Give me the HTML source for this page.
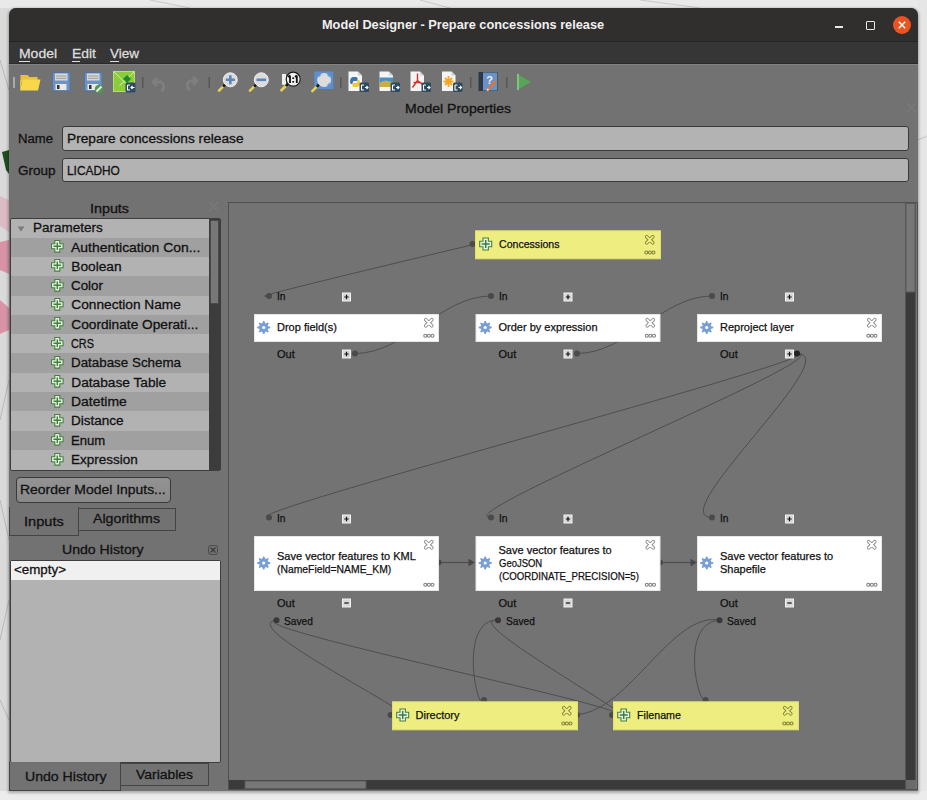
<!DOCTYPE html>
<html><head><meta charset="utf-8">
<style>
*{margin:0;padding:0;box-sizing:border-box}
html,body{width:927px;height:800px;overflow:hidden;background:#e6e6e6;font-family:"Liberation Sans",sans-serif}
.a{position:absolute}
.t{position:absolute;white-space:pre;line-height:1;transform-origin:0 0;-webkit-text-stroke:0.3px currentColor}
.nt{position:absolute;white-space:pre;line-height:13px;font-size:11px;color:#111;transform-origin:0 0;-webkit-text-stroke:0.25px #111}
.field{position:absolute;background:#b3b3b3;border:1px solid #3a3a3a;border-radius:3px}
</style></head><body>

<svg class="a" style="left:0;top:0" width="927" height="800">
  <rect x="0" y="0" width="927" height="800" fill="#e4e4e4"/>
  <rect x="0" y="0" width="9" height="800" fill="#dadada"/>
  <path d="M2 152 L9 150 L9 174 L6 170 Z" fill="#1f4f1f"/>
  <path d="M0 196 L9 200 L9 232 L0 226 Z" fill="#dcbcc4"/>
  <path d="M0 242 L9 240 L9 274 L0 270 Z" fill="#d894a6"/>
  <path d="M0 300 L9 308 L9 330 L0 334 Z" fill="#d894a6"/>
  <path d="M0 0 H927 V8 H0 Z" fill="#e9e9e9"/>
  <path d="M918 0 H927 V800 H918 Z" fill="#e6e6e6"/>
  <path d="M0 791 H927 V800 H0 Z" fill="#ececec"/>
  <path d="M0 60 L9 90 M0 420 L9 380 M0 500 L9 540 M0 640 L9 600 M0 700 L9 720" stroke="#b0b0b0" stroke-width="0.8"/>
  <path d="M150 0 L190 8 M420 0 L450 8 M640 0 L700 8 M918 140 Q922 138 927 136" stroke="#c0c0c0" stroke-width="0.8"/>
</svg>

<div class="a" style="left:9px;top:8px;width:909px;height:783px;background:#727272;border-radius:7px 7px 0 0;box-shadow:0 1px 3px 1px rgba(0,0,0,.28)"></div>
<div class="a" style="left:9px;top:8px;width:909px;height:33px;background:#312e2e;border-radius:7px 7px 0 0"></div>
<div class="a" style="left:834.5px;top:26.3px;width:8px;height:1.7px;background:#e8e8e8"></div>
<div class="a" style="left:866px;top:21px;width:8.5px;height:8.5px;border:1.6px solid #e8e8e8;border-radius:1px"></div>
<div class="a" style="left:892.5px;top:16px;width:18px;height:18px;border-radius:50%;background:#e95420"></div>
<svg class="a" style="left:892.5px;top:16px" width="18" height="18"><path d="M5.8 5.8 L12.2 12.2 M12.2 5.8 L5.8 12.2" stroke="#fff" stroke-width="1.5"/></svg>
<div class="a" style="left:9px;top:41px;width:909px;height:23px;background:#363636;border-top:1.5px solid #242424;border-bottom:1px solid #2a2a2a"></div>
<div class="a" style="left:9px;top:64px;width:909px;height:1px;background:#828282"></div>
<div class="a" style="left:19px;top:61px;width:11px;height:1px;background:#dddddd"></div>
<div class="a" style="left:72px;top:61px;width:8px;height:1px;background:#dddddd"></div>
<div class="a" style="left:110px;top:61px;width:9px;height:1px;background:#dddddd"></div>

<!-- toolbar -->
<svg class="a" style="left:0;top:64px" width="560" height="36">
  <rect x="13" y="13" width="2" height="11" fill="#a9a9a9"/>
  <!-- folder -->
  <path d="M20.5 11 h7 l2 2 h8 v4 h-17 z" fill="#e8c33a"/>
  <path d="M20 26.5 l2.5 -11 h18 l-2.5 11 z" fill="#f7d84a"/>
  <path d="M20 16 v10.5 l2.5 -11 z" fill="#e6c038"/>
  <!-- save -->
  <g transform="translate(52,8)">
    <rect x="0.5" y="0.5" width="17.5" height="18.5" rx="1.5" fill="#6d93c3" stroke="#54749e" stroke-width="1"/>
    <rect x="3" y="1.5" width="12.5" height="7" fill="#d9d9d9"/>
    <rect x="4" y="3.5" width="10.5" height="1" fill="#9a9a9a"/>
    <rect x="4" y="5.8" width="10.5" height="1" fill="#9a9a9a"/>
    <rect x="3.5" y="12" width="11" height="6" fill="#e8e8e8"/>
    <rect x="5" y="13" width="2.5" height="4" fill="#333"/>
  </g>
  <!-- save as -->
  <g transform="translate(84,8)">
    <rect x="0.5" y="0.5" width="17.5" height="18.5" rx="1.5" fill="#6d93c3" stroke="#54749e" stroke-width="1"/>
    <rect x="3" y="1.5" width="12.5" height="7" fill="#d9d9d9"/>
    <rect x="4" y="3.5" width="10.5" height="1" fill="#9a9a9a"/>
    <rect x="4" y="5.8" width="10.5" height="1" fill="#9a9a9a"/>
    <rect x="3.5" y="12" width="11" height="6" fill="#e8e8e8"/>
    <rect x="5" y="13" width="2.5" height="4" fill="#333"/>
    <circle cx="15" cy="17" r="4.2" fill="#4f9a4f"/>
    <path d="M12.5 19.5 L17.5 14.5" stroke="#f2f2f2" stroke-width="1.8"/>
  </g>
  <!-- export model image -->
  <g transform="translate(113.5,7.5)">
    <rect x="0" y="0" width="21" height="20" fill="#8ccc3c" stroke="#b8e070" stroke-width="1"/>
    <path d="M0.5 0.5 L20.5 19.5 M20.5 0.5 L6 14" stroke="#d8f0a8" stroke-width="1"/>
    <path d="M13.5 3.5 l4 4 l-4 4 l-4 -4 z" fill="#1e8a2e"/>
    <rect x="12" y="11" width="10" height="10" rx="1.5" fill="#2e4a5e"/>
    <path d="M14 13.5 v5 h2.5 M14 13.5 h2.5 M17.5 16 h3.5 M19 14.5 l-1.5 1.5 l1.5 1.5" stroke="#fff" stroke-width="1.1" fill="none"/>
  </g>
  <rect x="142" y="13" width="1.5" height="11" fill="#565656"/>
  <!-- undo redo disabled -->
  <path d="M157 14 l-4 4 l4 4 M153 18 h8 a5 5 0 0 1 0 9" stroke="#7f7f7f" stroke-width="2.8" fill="none"/>
  <path d="M193 13 l4 4 l-4 4 M197 17 h-7 a5 5 0 0 0 0 9" stroke="#7f7f7f" stroke-width="2.8" fill="none"/>
  <rect x="208.5" y="13" width="1.5" height="11" fill="#565656"/>
  <!-- zoom in -->
  <g transform="translate(230.3,15.8)">
    <path d="M-11.3 10.9 L-7 6.6" stroke="#e6d25a" stroke-width="2.6" stroke-linecap="round"/>
    <path d="M-7.2 6.8 L-5 4.6" stroke="#111" stroke-width="2.4"/>
    <circle cx="0" cy="0" r="7" fill="#dcdcdc" stroke="#eeeeee" stroke-width="1"/>
    <path d="M-4.5 0 h9 M0 -4.5 v9" stroke="#5a86b8" stroke-width="2.6"/>
  </g>
  <g transform="translate(261.3,15.8)">
    <path d="M-11.3 10.9 L-7 6.6" stroke="#e6d25a" stroke-width="2.6" stroke-linecap="round"/>
    <path d="M-7.2 6.8 L-5 4.6" stroke="#111" stroke-width="2.4"/>
    <circle cx="0" cy="0" r="7" fill="#dcdcdc" stroke="#eeeeee" stroke-width="1"/>
    <path d="M-4.8 0 h9.6" stroke="#5a86b8" stroke-width="2.6"/>
  </g>
  <g transform="translate(293.2,15.2)">
    <rect x="-11.2" y="-5.2" width="4" height="10.8" fill="#eef2ee"/>
    <path d="M-11.8 11.1 L-7.2 6.6" stroke="#e6d25a" stroke-width="2.6" stroke-linecap="round"/>
    <path d="M-7.4 6.8 L-5.2 4.6" stroke="#111" stroke-width="2.4"/>
    <circle cx="0" cy="0" r="7" fill="#efefef" stroke="#1a1a1a" stroke-width="1.2"/>
    <path d="M-3.2 -3.8 V3.8 M-5 -2.2 L-3.2 -3.8 M3.6 -3.8 V3.8 M1.8 -2.2 L3.6 -3.8" stroke="#111" stroke-width="1.8" fill="none"/><rect x="-0.9" y="-1.8" width="1.8" height="1.6" fill="#111"/><rect x="-0.9" y="1.8" width="1.8" height="1.6" fill="#111"/>
  </g>
  <g transform="translate(324.1,16)">
    <rect x="-9.8" y="-8.5" width="19" height="17.5" fill="#5a8fd0"/>
    <circle cx="0" cy="0" r="7" fill="#dcdcdc"/>
    <path d="M-5.5 -5.5 l3 0 l-3 3 z M5.5 -5.5 l-3 0 l3 3 z M5.5 5.5 l-3 0 l3 -3 z" fill="#5a8fd0"/>
    <path d="M-11.8 11.1 L-7.2 6.6" stroke="#e6d25a" stroke-width="2.6" stroke-linecap="round"/>
    <path d="M-7.4 6.8 L-5.2 4.6" stroke="#111" stroke-width="2.4"/>
  </g>
  <rect x="340" y="13" width="1.5" height="11" fill="#565656"/>
  <!-- page icons -->
  <g transform="translate(348.5,7.5)">
    <path d="M0 0 h9.5 l4 4 v15.5 h-13.5 z" fill="#f4f4f4"/>
    <path d="M9.5 0 v4 h4" fill="#d0d0d0"/>
    <path d="M1.5 10.5 Q1.5 5.5 5 5.5 H7.5 Q9 5.5 9 7 V9.5 H5.5 Q4.2 9.5 4.2 11 V12.5 H3 Q1.5 12.5 1.5 10.5 Z" fill="#3a75b0"/>
    <path d="M11.5 10.5 Q11.5 15.5 8 15.5 H5.5 Q4 15.5 4 14 V11.5 H7.5 Q8.8 11.5 8.8 10 V8.5 H10 Q11.5 8.5 11.5 10.5 Z" fill="#f2c53a"/>
    <rect x="11" y="11" width="9.5" height="9.5" rx="1.5" fill="#2e4a5e"/>
    <path d="M13 13.5 v5 h2.5 M13 13.5 h2.5 M16.5 16 h3 M18 14.5 l1.5 1.5 l-1.5 1.5" stroke="#fff" stroke-width="1.1" fill="none"/>
  </g>
  <g transform="translate(379.5,7.5)">
    <path d="M0 0 h9.5 l4 4 v15.5 h-13.5 z" fill="#f4f4f4"/>
    <path d="M9.5 0 v4 h4" fill="#d0d0d0"/>
    <rect x="0" y="6" width="13.5" height="9.5" fill="#4a90c8"/>
    <path d="M0 15.5 v-4 q6 -5 13.5 0 v4 z" fill="#c8b040"/>
    <rect x="11" y="11" width="9.5" height="9.5" rx="1.5" fill="#2e4a5e"/>
    <path d="M13 13.5 v5 h2.5 M13 13.5 h2.5 M16.5 16 h3 M18 14.5 l1.5 1.5 l-1.5 1.5" stroke="#fff" stroke-width="1.1" fill="none"/>
  </g>
  <g transform="translate(410.5,7.5)">
    <path d="M0 0 h9.5 l4 4 v15.5 h-13.5 z" fill="#f4f4f4"/>
    <path d="M9.5 0 v4 h4" fill="#d0d0d0"/>
    <path d="M7 2 v7 l-5 7 M7 9 l5 4 M3 11 h8" stroke="#d8302a" stroke-width="1.4" fill="none"/>
    <rect x="11" y="11" width="9.5" height="9.5" rx="1.5" fill="#2e4a5e"/>
    <path d="M13 13.5 v5 h2.5 M13 13.5 h2.5 M16.5 16 h3 M18 14.5 l1.5 1.5 l-1.5 1.5" stroke="#fff" stroke-width="1.1" fill="none"/>
  </g>
  <g transform="translate(442,7.5)">
    <path d="M0 0 h9.5 l4 4 v15.5 h-13.5 z" fill="#f4f4f4"/>
    <path d="M9.5 0 v4 h4" fill="#d0d0d0"/>
    <path d="M6.5 4.5 v11 M1.5 10 h10 M3 6.5 l7 7 M10 6.5 l-7 7" stroke="#f5a623" stroke-width="1.8"/>
    <rect x="11" y="11" width="9.5" height="9.5" rx="1.5" fill="#2e4a5e"/>
    <path d="M13 13.5 v5 h2.5 M13 13.5 h2.5 M16.5 16 h3 M18 14.5 l1.5 1.5 l-1.5 1.5" stroke="#fff" stroke-width="1.1" fill="none"/>
  </g>
  <rect x="470" y="13" width="1.5" height="11" fill="#565656"/>
  <g transform="translate(478.5,8)">
    <rect x="0" y="0" width="19" height="19" fill="#2a3a48"/>
    <rect x="4.5" y="0.5" width="14" height="18" fill="#6a92c4"/>
    <text x="11" y="12" font-size="11" font-weight="bold" text-anchor="middle" fill="#f0f0f0" font-family="Liberation Sans">?</text>
    <path d="M9 18 L17 9" stroke="#e8742a" stroke-width="2.6"/>
    <path d="M8.5 18.5 L10 17" stroke="#f5d0a0" stroke-width="2"/>
  </g>
  <rect x="506" y="13" width="1.5" height="11" fill="#565656"/>
  <path d="M517 10 L531 18 L517 26 z" fill="#58a558"/>
  <rect x="517" y="10" width="2" height="16" fill="#7cc67c"/>
</svg>

<svg class="a" style="left:906px;top:102px" width="11" height="11"><path d="M1.5 1.5 L9.5 9.5 M9.5 1.5 L1.5 9.5" stroke="#838383" stroke-width="1.2" stroke-dasharray="1.5 1"/></svg>
<div class="field" style="left:62px;top:126px;width:847px;height:25px"></div>
<div class="field" style="left:62px;top:157.5px;width:847px;height:24.5px"></div>
<svg class="a" style="left:208px;top:201px" width="11" height="11"><path d="M1.5 1.5 L9.5 9.5 M9.5 1.5 L1.5 9.5" stroke="#808080" stroke-width="1.2" stroke-dasharray="1.5 1"/></svg>
<div class="a" style="left:9.5px;top:218px;width:211px;height:252.5px;background:#b2b2b2;border:1px solid #3e3e3e;border-radius:2px"></div>
<svg class="a" style="left:16.5px;top:225.5px" width="10" height="7"><path d="M0.5 0.5 h7 l-3.5 5 z" fill="#7a7a7a"/></svg>
<div class="a" style="left:10.5px;top:237.60px;width:198.5px;height:19.31px;background:#a0a0a0"></div>
<svg class="a" style="left:51px;top:240.1px" width="14" height="14"><path d="M3.8 0.5 H8.8 V3.8 H12.1 V8.8 H8.8 V12.1 H3.8 V8.8 H0.5 V3.8 H3.8 Z" fill="#e4f5de" stroke="#4b7d45" stroke-width="1.1"/><path d="M6.3 2.5 V10.1 M2.5 6.3 H10.1" stroke="#3f8040" stroke-width="1.4"/></svg>
<svg class="a" style="left:51px;top:259.4px" width="14" height="14"><path d="M3.8 0.5 H8.8 V3.8 H12.1 V8.8 H8.8 V12.1 H3.8 V8.8 H0.5 V3.8 H3.8 Z" fill="#e4f5de" stroke="#4b7d45" stroke-width="1.1"/><path d="M6.3 2.5 V10.1 M2.5 6.3 H10.1" stroke="#3f8040" stroke-width="1.4"/></svg>
<div class="a" style="left:10.5px;top:276.22px;width:198.5px;height:19.31px;background:#a0a0a0"></div>
<svg class="a" style="left:51px;top:278.7px" width="14" height="14"><path d="M3.8 0.5 H8.8 V3.8 H12.1 V8.8 H8.8 V12.1 H3.8 V8.8 H0.5 V3.8 H3.8 Z" fill="#e4f5de" stroke="#4b7d45" stroke-width="1.1"/><path d="M6.3 2.5 V10.1 M2.5 6.3 H10.1" stroke="#3f8040" stroke-width="1.4"/></svg>
<svg class="a" style="left:51px;top:298.0px" width="14" height="14"><path d="M3.8 0.5 H8.8 V3.8 H12.1 V8.8 H8.8 V12.1 H3.8 V8.8 H0.5 V3.8 H3.8 Z" fill="#e4f5de" stroke="#4b7d45" stroke-width="1.1"/><path d="M6.3 2.5 V10.1 M2.5 6.3 H10.1" stroke="#3f8040" stroke-width="1.4"/></svg>
<div class="a" style="left:10.5px;top:314.84px;width:198.5px;height:19.31px;background:#a0a0a0"></div>
<svg class="a" style="left:51px;top:317.3px" width="14" height="14"><path d="M3.8 0.5 H8.8 V3.8 H12.1 V8.8 H8.8 V12.1 H3.8 V8.8 H0.5 V3.8 H3.8 Z" fill="#e4f5de" stroke="#4b7d45" stroke-width="1.1"/><path d="M6.3 2.5 V10.1 M2.5 6.3 H10.1" stroke="#3f8040" stroke-width="1.4"/></svg>
<svg class="a" style="left:51px;top:336.6px" width="14" height="14"><path d="M3.8 0.5 H8.8 V3.8 H12.1 V8.8 H8.8 V12.1 H3.8 V8.8 H0.5 V3.8 H3.8 Z" fill="#e4f5de" stroke="#4b7d45" stroke-width="1.1"/><path d="M6.3 2.5 V10.1 M2.5 6.3 H10.1" stroke="#3f8040" stroke-width="1.4"/></svg>
<div class="a" style="left:10.5px;top:353.46px;width:198.5px;height:19.31px;background:#a0a0a0"></div>
<svg class="a" style="left:51px;top:356.0px" width="14" height="14"><path d="M3.8 0.5 H8.8 V3.8 H12.1 V8.8 H8.8 V12.1 H3.8 V8.8 H0.5 V3.8 H3.8 Z" fill="#e4f5de" stroke="#4b7d45" stroke-width="1.1"/><path d="M6.3 2.5 V10.1 M2.5 6.3 H10.1" stroke="#3f8040" stroke-width="1.4"/></svg>
<svg class="a" style="left:51px;top:375.3px" width="14" height="14"><path d="M3.8 0.5 H8.8 V3.8 H12.1 V8.8 H8.8 V12.1 H3.8 V8.8 H0.5 V3.8 H3.8 Z" fill="#e4f5de" stroke="#4b7d45" stroke-width="1.1"/><path d="M6.3 2.5 V10.1 M2.5 6.3 H10.1" stroke="#3f8040" stroke-width="1.4"/></svg>
<div class="a" style="left:10.5px;top:392.08px;width:198.5px;height:19.31px;background:#a0a0a0"></div>
<svg class="a" style="left:51px;top:394.6px" width="14" height="14"><path d="M3.8 0.5 H8.8 V3.8 H12.1 V8.8 H8.8 V12.1 H3.8 V8.8 H0.5 V3.8 H3.8 Z" fill="#e4f5de" stroke="#4b7d45" stroke-width="1.1"/><path d="M6.3 2.5 V10.1 M2.5 6.3 H10.1" stroke="#3f8040" stroke-width="1.4"/></svg>
<svg class="a" style="left:51px;top:413.9px" width="14" height="14"><path d="M3.8 0.5 H8.8 V3.8 H12.1 V8.8 H8.8 V12.1 H3.8 V8.8 H0.5 V3.8 H3.8 Z" fill="#e4f5de" stroke="#4b7d45" stroke-width="1.1"/><path d="M6.3 2.5 V10.1 M2.5 6.3 H10.1" stroke="#3f8040" stroke-width="1.4"/></svg>
<div class="a" style="left:10.5px;top:430.70px;width:198.5px;height:19.31px;background:#a0a0a0"></div>
<svg class="a" style="left:51px;top:433.2px" width="14" height="14"><path d="M3.8 0.5 H8.8 V3.8 H12.1 V8.8 H8.8 V12.1 H3.8 V8.8 H0.5 V3.8 H3.8 Z" fill="#e4f5de" stroke="#4b7d45" stroke-width="1.1"/><path d="M6.3 2.5 V10.1 M2.5 6.3 H10.1" stroke="#3f8040" stroke-width="1.4"/></svg>
<svg class="a" style="left:51px;top:452.5px" width="14" height="14"><path d="M3.8 0.5 H8.8 V3.8 H12.1 V8.8 H8.8 V12.1 H3.8 V8.8 H0.5 V3.8 H3.8 Z" fill="#e4f5de" stroke="#4b7d45" stroke-width="1.1"/><path d="M6.3 2.5 V10.1 M2.5 6.3 H10.1" stroke="#3f8040" stroke-width="1.4"/></svg>
<div class="a" style="left:209px;top:219px;width:10.5px;height:250.5px;background:#3c3c3c"></div>
<div class="a" style="left:209.5px;top:219.5px;width:9px;height:84px;background:#777777;border:1px solid #4a4a4a"></div>
<div class="a" style="left:15.5px;top:476.5px;width:155px;height:26px;background:linear-gradient(#939393,#888888);border:1px solid #3a3a3a;border-radius:4px"></div>
<div class="a" style="left:78.5px;top:508px;width:97px;height:22.5px;background:#727272;border:1px solid #444;border-left:none"></div>
<div class="a" style="left:9px;top:507px;width:70px;height:28.5px;background:#727272;border:1px solid #444;border-top:none"></div>
<svg class="a" style="left:207.5px;top:544.5px" width="11" height="11"><rect x="0.5" y="0.5" width="9" height="9" rx="2" fill="none" stroke="#4a4a4a" stroke-width="1"/><path d="M2.5 2.5 L7.5 7.5 M7.5 2.5 L2.5 7.5" stroke="#3a3a3a" stroke-width="1.2"/></svg>
<div class="a" style="left:9.5px;top:559.5px;width:211px;height:203.5px;background:#b2b2b2;border:1px solid #3e3e3e;border-radius:2px"></div>
<div class="a" style="left:10.5px;top:560.5px;width:209px;height:19px;background:#f0f0f0"></div>
<div class="a" style="left:120.5px;top:763px;width:88px;height:22.5px;background:#727272;border:1px solid #444;border-left:none"></div>
<div class="a" style="left:9px;top:762px;width:112px;height:29px;background:#727272;border:1px solid #444;border-top:none"></div>
<svg class="a" style="left:0;top:0" width="927" height="800">
<rect x="228.5" y="202.5" width="689" height="587" fill="#737373" stroke="#505050" stroke-width="1"/>
<rect x="905.5" y="203" width="10" height="577" fill="#3a3a3a"/>
<rect x="906" y="203.5" width="9" height="88.5" fill="#777" stroke="#5a5a5a" stroke-width="1"/>
<rect x="229" y="780" width="677" height="9" fill="#3a3a3a"/>
<rect x="245" y="781" width="121" height="7.5" fill="#777" stroke="#5a5a5a" stroke-width="1"/>
<rect x="905.5" y="780" width="10" height="9" fill="#6a6a6a"/>
<path d="M268.6 295.8 C232.1 301.6 446.8 251.0 473.9 244.4" fill="none" stroke="#4e4e4e" stroke-width="1"/>
<path d="M355 353.5 C405 353.5 441 296 491 296" fill="none" stroke="#4e4e4e" stroke-width="1"/>
<path d="M577 353.5 C627 353.5 662 296 712 296" fill="none" stroke="#4e4e4e" stroke-width="1"/>
<path d="M797 353.5 C847 353.5 219 517.5 269 517.5" fill="none" stroke="#4e4e4e" stroke-width="1"/>
<path d="M797 353.5 C847 353.5 441 517.5 491 517.5" fill="none" stroke="#4e4e4e" stroke-width="1"/>
<path d="M797 353.5 C847 353.5 662 517.5 712 517.5" fill="none" stroke="#4e4e4e" stroke-width="1"/>
<path d="M276.2 620.3 C232.2 625.4 445.4 727.4 391.5 712" fill="none" stroke="#4e4e4e" stroke-width="1"/>
<path d="M276.2 620.3 C238.6 627.5 660.9 713.2 612.5 714.7" fill="none" stroke="#4e4e4e" stroke-width="1"/>
<path d="M497.5 620 C456.5 620.1 478.7 719.8 484.4 699.75" fill="none" stroke="#4e4e4e" stroke-width="1"/>
<path d="M497.8 620.3 C451.7 617.4 681.6 741.7 612.5 714.7" fill="none" stroke="#4e4e4e" stroke-width="1"/>
<path d="M719.5 620.1 C672.4 611.5 629.7 709.2 578.3 714.5" fill="none" stroke="#4e4e4e" stroke-width="1"/>
<path d="M719.5 620.1 C678.9 623.2 698.3 706.2 705.7 699.9" fill="none" stroke="#4e4e4e" stroke-width="1"/>
<path d="M438.5 562.5 H469" stroke="#4e4e4e" stroke-width="1.2"/>
<path d="M468.5 558.8 L475 562.5 L468.5 566.3 z" fill="#474747"/>
<path d="M438.5 559.5 a3 3 0 0 1 0 6 z" fill="#474747"/>
<path d="M660 562.5 H691" stroke="#4e4e4e" stroke-width="1.2"/>
<path d="M690.5 558.8 L697 562.5 L690.5 566.3 z" fill="#474747"/>
<path d="M660 559.5 a3 3 0 0 1 0 6 z" fill="#474747"/>
<rect x="254.5" y="314.5" width="184" height="27" fill="#ffffff" stroke="#e6e6e6" stroke-width="1"/>
<path d="M263.05 320.93 L264.35 320.93 L265.04 323.10 L265.87 323.44 L267.89 322.40 L268.80 323.31 L267.76 325.33 L268.10 326.16 L270.27 326.85 L270.27 328.15 L268.10 328.84 L267.76 329.67 L268.80 331.69 L267.89 332.60 L265.87 331.56 L265.04 331.90 L264.35 334.07 L263.05 334.07 L262.36 331.90 L261.53 331.56 L259.51 332.60 L258.60 331.69 L259.64 329.67 L259.30 328.84 L257.13 328.15 L257.13 326.85 L259.30 326.16 L259.64 325.33 L258.60 323.31 L259.51 322.40 L261.53 323.44 L262.36 323.10z" fill="#789ed6"/><circle cx="263.7" cy="327.5" r="1.6" fill="#fff"/>
<path d="M425.7 319.7 L431.8 325.8 M431.8 319.7 L425.7 325.8" stroke="#8a8a8a" stroke-width="3.6" stroke-linecap="round"/><path d="M425.7 319.7 L431.8 325.8 M431.8 319.7 L425.7 325.8" stroke="#ffffff" stroke-width="1.8" stroke-linecap="round"/>
<circle cx="425.3" cy="335.7" r="1.5" fill="none" stroke="#808080" stroke-width="1.1"/><circle cx="428.9" cy="335.7" r="1.5" fill="none" stroke="#808080" stroke-width="1.1"/><circle cx="432.5" cy="335.7" r="1.5" fill="none" stroke="#808080" stroke-width="1.1"/>
<circle cx="269" cy="296" r="3" fill="#4a4a4a"/>
<rect x="342.5" y="293" width="8" height="8" fill="#d6d6d6" stroke="#f2f2f2" stroke-width="1"/>
<path d="M344.3 297 h4.4 M346.5 294.8 v4.4" stroke="#111" stroke-width="1.2"/>
<rect x="342.5" y="350" width="8" height="8" fill="#d6d6d6" stroke="#f2f2f2" stroke-width="1"/>
<path d="M344.3 354 h4.4 M346.5 351.8 v4.4" stroke="#111" stroke-width="1.2"/>
<circle cx="355" cy="353.5" r="3" fill="#4a4a4a"/>
<rect x="476.0" y="314.5" width="184" height="27" fill="#ffffff" stroke="#e6e6e6" stroke-width="1"/>
<path d="M484.55 320.93 L485.85 320.93 L486.54 323.10 L487.37 323.44 L489.39 322.40 L490.30 323.31 L489.26 325.33 L489.60 326.16 L491.77 326.85 L491.77 328.15 L489.60 328.84 L489.26 329.67 L490.30 331.69 L489.39 332.60 L487.37 331.56 L486.54 331.90 L485.85 334.07 L484.55 334.07 L483.86 331.90 L483.03 331.56 L481.01 332.60 L480.10 331.69 L481.14 329.67 L480.80 328.84 L478.63 328.15 L478.63 326.85 L480.80 326.16 L481.14 325.33 L480.10 323.31 L481.01 322.40 L483.03 323.44 L483.86 323.10z" fill="#789ed6"/><circle cx="485.2" cy="327.5" r="1.6" fill="#fff"/>
<path d="M647.2 319.7 L653.3 325.8 M653.3 319.7 L647.2 325.8" stroke="#8a8a8a" stroke-width="3.6" stroke-linecap="round"/><path d="M647.2 319.7 L653.3 325.8 M653.3 319.7 L647.2 325.8" stroke="#ffffff" stroke-width="1.8" stroke-linecap="round"/>
<circle cx="646.8" cy="335.7" r="1.5" fill="none" stroke="#808080" stroke-width="1.1"/><circle cx="650.4" cy="335.7" r="1.5" fill="none" stroke="#808080" stroke-width="1.1"/><circle cx="654.0" cy="335.7" r="1.5" fill="none" stroke="#808080" stroke-width="1.1"/>
<circle cx="491" cy="296" r="3" fill="#4a4a4a"/>
<rect x="564.0" y="293" width="8" height="8" fill="#d6d6d6" stroke="#f2f2f2" stroke-width="1"/>
<path d="M565.8 297 h4.4 M568.0 294.8 v4.4" stroke="#111" stroke-width="1.2"/>
<rect x="564.0" y="350" width="8" height="8" fill="#d6d6d6" stroke="#f2f2f2" stroke-width="1"/>
<path d="M565.8 354 h4.4 M568.0 351.8 v4.4" stroke="#111" stroke-width="1.2"/>
<circle cx="577" cy="353.5" r="3" fill="#4a4a4a"/>
<rect x="697.5" y="314.5" width="184" height="27" fill="#ffffff" stroke="#e6e6e6" stroke-width="1"/>
<path d="M706.05 320.93 L707.35 320.93 L708.04 323.10 L708.87 323.44 L710.89 322.40 L711.80 323.31 L710.76 325.33 L711.10 326.16 L713.27 326.85 L713.27 328.15 L711.10 328.84 L710.76 329.67 L711.80 331.69 L710.89 332.60 L708.87 331.56 L708.04 331.90 L707.35 334.07 L706.05 334.07 L705.36 331.90 L704.53 331.56 L702.51 332.60 L701.60 331.69 L702.64 329.67 L702.30 328.84 L700.13 328.15 L700.13 326.85 L702.30 326.16 L702.64 325.33 L701.60 323.31 L702.51 322.40 L704.53 323.44 L705.36 323.10z" fill="#789ed6"/><circle cx="706.7" cy="327.5" r="1.6" fill="#fff"/>
<path d="M868.7 319.7 L874.8 325.8 M874.8 319.7 L868.7 325.8" stroke="#8a8a8a" stroke-width="3.6" stroke-linecap="round"/><path d="M868.7 319.7 L874.8 325.8 M874.8 319.7 L868.7 325.8" stroke="#ffffff" stroke-width="1.8" stroke-linecap="round"/>
<circle cx="868.3" cy="335.7" r="1.5" fill="none" stroke="#808080" stroke-width="1.1"/><circle cx="871.9" cy="335.7" r="1.5" fill="none" stroke="#808080" stroke-width="1.1"/><circle cx="875.5" cy="335.7" r="1.5" fill="none" stroke="#808080" stroke-width="1.1"/>
<circle cx="712" cy="296" r="3" fill="#4a4a4a"/>
<rect x="785.5" y="293" width="8" height="8" fill="#d6d6d6" stroke="#f2f2f2" stroke-width="1"/>
<path d="M787.3 297 h4.4 M789.5 294.8 v4.4" stroke="#111" stroke-width="1.2"/>
<rect x="785.5" y="350" width="8" height="8" fill="#d6d6d6" stroke="#f2f2f2" stroke-width="1"/>
<path d="M787.3 354 h4.4 M789.5 351.8 v4.4" stroke="#111" stroke-width="1.2"/>
<circle cx="797" cy="353.5" r="3" fill="#222"/>
<rect x="254.5" y="536.5" width="184" height="54" fill="#ffffff" stroke="#e6e6e6" stroke-width="1"/>
<path d="M263.05 556.43 L264.35 556.43 L265.04 558.60 L265.87 558.94 L267.89 557.90 L268.80 558.81 L267.76 560.83 L268.10 561.66 L270.27 562.35 L270.27 563.65 L268.10 564.34 L267.76 565.17 L268.80 567.19 L267.89 568.10 L265.87 567.06 L265.04 567.40 L264.35 569.57 L263.05 569.57 L262.36 567.40 L261.53 567.06 L259.51 568.10 L258.60 567.19 L259.64 565.17 L259.30 564.34 L257.13 563.65 L257.13 562.35 L259.30 561.66 L259.64 560.83 L258.60 558.81 L259.51 557.90 L261.53 558.94 L262.36 558.60z" fill="#789ed6"/><circle cx="263.7" cy="563.0" r="1.6" fill="#fff"/>
<path d="M425.7 541.7 L431.8 547.8 M431.8 541.7 L425.7 547.8" stroke="#8a8a8a" stroke-width="3.6" stroke-linecap="round"/><path d="M425.7 541.7 L431.8 547.8 M431.8 541.7 L425.7 547.8" stroke="#ffffff" stroke-width="1.8" stroke-linecap="round"/>
<circle cx="425.3" cy="584.7" r="1.5" fill="none" stroke="#808080" stroke-width="1.1"/><circle cx="428.9" cy="584.7" r="1.5" fill="none" stroke="#808080" stroke-width="1.1"/><circle cx="432.5" cy="584.7" r="1.5" fill="none" stroke="#808080" stroke-width="1.1"/>
<circle cx="269" cy="517.5" r="3" fill="#4a4a4a"/>
<rect x="342.5" y="515" width="8" height="8" fill="#d6d6d6" stroke="#f2f2f2" stroke-width="1"/>
<path d="M344.3 519 h4.4 M346.5 516.8 v4.4" stroke="#111" stroke-width="1.2"/>
<rect x="342.5" y="599" width="8" height="8" fill="#d6d6d6" stroke="#f2f2f2" stroke-width="1"/>
<path d="M344.3 603 h4.4" stroke="#111" stroke-width="1.2"/>
<circle cx="276.5" cy="620.3" r="3" fill="#383838"/>
<rect x="476.0" y="536.5" width="184" height="54" fill="#ffffff" stroke="#e6e6e6" stroke-width="1"/>
<path d="M484.55 556.43 L485.85 556.43 L486.54 558.60 L487.37 558.94 L489.39 557.90 L490.30 558.81 L489.26 560.83 L489.60 561.66 L491.77 562.35 L491.77 563.65 L489.60 564.34 L489.26 565.17 L490.30 567.19 L489.39 568.10 L487.37 567.06 L486.54 567.40 L485.85 569.57 L484.55 569.57 L483.86 567.40 L483.03 567.06 L481.01 568.10 L480.10 567.19 L481.14 565.17 L480.80 564.34 L478.63 563.65 L478.63 562.35 L480.80 561.66 L481.14 560.83 L480.10 558.81 L481.01 557.90 L483.03 558.94 L483.86 558.60z" fill="#789ed6"/><circle cx="485.2" cy="563.0" r="1.6" fill="#fff"/>
<path d="M647.2 541.7 L653.3 547.8 M653.3 541.7 L647.2 547.8" stroke="#8a8a8a" stroke-width="3.6" stroke-linecap="round"/><path d="M647.2 541.7 L653.3 547.8 M653.3 541.7 L647.2 547.8" stroke="#ffffff" stroke-width="1.8" stroke-linecap="round"/>
<circle cx="646.8" cy="584.7" r="1.5" fill="none" stroke="#808080" stroke-width="1.1"/><circle cx="650.4" cy="584.7" r="1.5" fill="none" stroke="#808080" stroke-width="1.1"/><circle cx="654.0" cy="584.7" r="1.5" fill="none" stroke="#808080" stroke-width="1.1"/>
<circle cx="491" cy="517.5" r="3" fill="#4a4a4a"/>
<rect x="564.0" y="515" width="8" height="8" fill="#d6d6d6" stroke="#f2f2f2" stroke-width="1"/>
<path d="M565.8 519 h4.4 M568.0 516.8 v4.4" stroke="#111" stroke-width="1.2"/>
<rect x="564.0" y="599" width="8" height="8" fill="#d6d6d6" stroke="#f2f2f2" stroke-width="1"/>
<path d="M565.8 603 h4.4" stroke="#111" stroke-width="1.2"/>
<circle cx="498.0" cy="620.3" r="3" fill="#383838"/>
<rect x="697.5" y="536.5" width="184" height="54" fill="#ffffff" stroke="#e6e6e6" stroke-width="1"/>
<path d="M706.05 556.43 L707.35 556.43 L708.04 558.60 L708.87 558.94 L710.89 557.90 L711.80 558.81 L710.76 560.83 L711.10 561.66 L713.27 562.35 L713.27 563.65 L711.10 564.34 L710.76 565.17 L711.80 567.19 L710.89 568.10 L708.87 567.06 L708.04 567.40 L707.35 569.57 L706.05 569.57 L705.36 567.40 L704.53 567.06 L702.51 568.10 L701.60 567.19 L702.64 565.17 L702.30 564.34 L700.13 563.65 L700.13 562.35 L702.30 561.66 L702.64 560.83 L701.60 558.81 L702.51 557.90 L704.53 558.94 L705.36 558.60z" fill="#789ed6"/><circle cx="706.7" cy="563.0" r="1.6" fill="#fff"/>
<path d="M868.7 541.7 L874.8 547.8 M874.8 541.7 L868.7 547.8" stroke="#8a8a8a" stroke-width="3.6" stroke-linecap="round"/><path d="M868.7 541.7 L874.8 547.8 M874.8 541.7 L868.7 547.8" stroke="#ffffff" stroke-width="1.8" stroke-linecap="round"/>
<circle cx="868.3" cy="584.7" r="1.5" fill="none" stroke="#808080" stroke-width="1.1"/><circle cx="871.9" cy="584.7" r="1.5" fill="none" stroke="#808080" stroke-width="1.1"/><circle cx="875.5" cy="584.7" r="1.5" fill="none" stroke="#808080" stroke-width="1.1"/>
<circle cx="712" cy="517.5" r="3" fill="#4a4a4a"/>
<rect x="785.5" y="515" width="8" height="8" fill="#d6d6d6" stroke="#f2f2f2" stroke-width="1"/>
<path d="M787.3 519 h4.4 M789.5 516.8 v4.4" stroke="#111" stroke-width="1.2"/>
<rect x="785.5" y="599" width="8" height="8" fill="#d6d6d6" stroke="#f2f2f2" stroke-width="1"/>
<path d="M787.3 603 h4.4" stroke="#111" stroke-width="1.2"/>
<circle cx="719.5" cy="620.3" r="3" fill="#383838"/>
<circle cx="472.5" cy="244" r="3" fill="#4a4a4a"/>
<circle cx="390.5" cy="715" r="3" fill="#4a4a4a"/>
<circle cx="484" cy="700" r="3" fill="#4a4a4a"/>
<circle cx="577" cy="715" r="3" fill="#4a4a4a"/>
<circle cx="612" cy="715" r="3" fill="#4a4a4a"/>
<circle cx="705.6" cy="700" r="3" fill="#4a4a4a"/>
<rect x="475.5" y="230.8" width="185" height="28" fill="#edee7f" stroke="#e0e070" stroke-width="1"/>
<g transform="translate(479.2,237.5)"><path d="M3.8 0.5 H9.2 V3.8 H12.5 V9.2 H9.2 V12.5 H3.8 V9.2 H0.5 V3.8 H3.8 Z" fill="#e4f5de" stroke="#4b7d45" stroke-width="1.1"/><path d="M6.5 2.5 V10.5 M2.5 6.5 H10.5" stroke="#3d7a4a" stroke-width="1.5"/></g>
<path d="M646.7 236.7 L652.8 242.8 M652.8 236.7 L646.7 242.8" stroke="#84843a" stroke-width="3.6" stroke-linecap="round"/><path d="M646.7 236.7 L652.8 242.8 M652.8 236.7 L646.7 242.8" stroke="#eeee80" stroke-width="1.8" stroke-linecap="round"/>
<circle cx="646.3" cy="252.5" r="1.5" fill="none" stroke="#84843a" stroke-width="1.1"/><circle cx="649.9" cy="252.5" r="1.5" fill="none" stroke="#84843a" stroke-width="1.1"/><circle cx="653.5" cy="252.5" r="1.5" fill="none" stroke="#84843a" stroke-width="1.1"/>
<rect x="392.5" y="701.8" width="185" height="28" fill="#edee7f" stroke="#e0e070" stroke-width="1"/>
<g transform="translate(396.2,708.5)"><path d="M3.8 0.5 H9.2 V3.8 H12.5 V9.2 H9.2 V12.5 H3.8 V9.2 H0.5 V3.8 H3.8 Z" fill="#e4f5de" stroke="#4b7d45" stroke-width="1.1"/><path d="M6.5 2.5 V10.5 M2.5 6.5 H10.5" stroke="#3d7a4a" stroke-width="1.5"/></g>
<path d="M563.7 707.7 L569.8 713.8 M569.8 707.7 L563.7 713.8" stroke="#84843a" stroke-width="3.6" stroke-linecap="round"/><path d="M563.7 707.7 L569.8 713.8 M569.8 707.7 L563.7 713.8" stroke="#eeee80" stroke-width="1.8" stroke-linecap="round"/>
<circle cx="563.3" cy="723.5" r="1.5" fill="none" stroke="#84843a" stroke-width="1.1"/><circle cx="566.9" cy="723.5" r="1.5" fill="none" stroke="#84843a" stroke-width="1.1"/><circle cx="570.5" cy="723.5" r="1.5" fill="none" stroke="#84843a" stroke-width="1.1"/>
<rect x="613.5" y="701.8" width="185" height="28" fill="#edee7f" stroke="#e0e070" stroke-width="1"/>
<g transform="translate(617.2,708.5)"><path d="M3.8 0.5 H9.2 V3.8 H12.5 V9.2 H9.2 V12.5 H3.8 V9.2 H0.5 V3.8 H3.8 Z" fill="#e4f5de" stroke="#4b7d45" stroke-width="1.1"/><path d="M6.5 2.5 V10.5 M2.5 6.5 H10.5" stroke="#3d7a4a" stroke-width="1.5"/></g>
<path d="M784.7 707.7 L790.8 713.8 M790.8 707.7 L784.7 713.8" stroke="#84843a" stroke-width="3.6" stroke-linecap="round"/><path d="M784.7 707.7 L790.8 713.8 M790.8 707.7 L784.7 713.8" stroke="#eeee80" stroke-width="1.8" stroke-linecap="round"/>
<circle cx="784.3" cy="723.5" r="1.5" fill="none" stroke="#84843a" stroke-width="1.1"/><circle cx="787.9" cy="723.5" r="1.5" fill="none" stroke="#84843a" stroke-width="1.1"/><circle cx="791.5" cy="723.5" r="1.5" fill="none" stroke="#84843a" stroke-width="1.1"/>
</svg>
<div class="nt" style="left:277px;top:290px;transform:scaleX(0.936);transform-origin:0 0">In</div>
<div class="nt" style="left:277px;top:347.5px">Out</div>
<div class="nt" style="left:277px;top:321.0px">Drop field(s)</div>
<div class="nt" style="left:498.5px;top:290px;transform:scaleX(0.936);transform-origin:0 0">In</div>
<div class="nt" style="left:498.5px;top:347.5px">Out</div>
<div class="nt" style="left:498.5px;top:321.0px">Order by expression</div>
<div class="nt" style="left:720px;top:290px;transform:scaleX(0.936);transform-origin:0 0">In</div>
<div class="nt" style="left:720px;top:347.5px">Out</div>
<div class="nt" style="left:720px;top:321.0px">Reproject layer</div>
<div class="nt" style="left:277px;top:512px;transform:scaleX(0.936);transform-origin:0 0">In</div>
<div class="nt" style="left:277px;top:596.5px">Out</div>
<div class="nt" style="left:284px;top:615px;transform:scaleX(0.923);transform-origin:0 0">Saved</div>
<div class="nt" style="left:277px;top:550.0px">Save vector features to KML</div>
<div class="nt" style="left:277px;top:563.0px;transform:scaleX(0.942);transform-origin:0 0">(NameField=NAME_KM)</div>
<div class="nt" style="left:498.5px;top:512px;transform:scaleX(0.936);transform-origin:0 0">In</div>
<div class="nt" style="left:498.5px;top:596.5px">Out</div>
<div class="nt" style="left:505.5px;top:615px;transform:scaleX(0.923);transform-origin:0 0">Saved</div>
<div class="nt" style="left:498.5px;top:543.5px">Save vector features to</div>
<div class="nt" style="left:498.5px;top:556.5px;transform:scaleX(0.862);transform-origin:0 0">GeoJSON</div>
<div class="nt" style="left:498.5px;top:569.5px;transform:scaleX(0.880);transform-origin:0 0">(COORDINATE_PRECISION=5)</div>
<div class="nt" style="left:720px;top:512px;transform:scaleX(0.936);transform-origin:0 0">In</div>
<div class="nt" style="left:720px;top:596.5px">Out</div>
<div class="nt" style="left:727px;top:615px;transform:scaleX(0.923);transform-origin:0 0">Saved</div>
<div class="nt" style="left:720px;top:550.0px">Save vector features to</div>
<div class="nt" style="left:720px;top:563.0px">Shapefile</div>
<div class="nt" style="left:498.5px;top:238px;transform:scaleX(0.961);transform-origin:0 0">Concessions</div>
<div class="nt" style="left:415.5px;top:709px">Directory</div>
<div class="nt" style="left:636.5px;top:709px;transform:scaleX(0.972);transform-origin:0 0">Filename</div>
<div class="t" style="left:322px;top:18.30px;font-size:13px;color:#f0f0f0;font-weight:bold;transform:scaleX(0.981);-webkit-text-stroke:0">Model Designer - Prepare concessions release</div>
<div class="t" style="left:19.2px;top:46.90px;font-size:13.7px;color:#dddddd;transform:scaleX(1.019)">Model</div>
<div class="t" style="left:71.9px;top:46.90px;font-size:13.7px;color:#dddddd;transform:scaleX(1.017)">Edit</div>
<div class="t" style="left:109.7px;top:46.90px;font-size:13.7px;color:#dddddd;transform:scaleX(0.986)">View</div>
<div class="t" style="left:405.3px;top:102.30px;font-size:13.7px;color:#111;transform:scaleX(1.024)">Model Properties</div>
<div class="t" style="left:18px;top:132.15px;font-size:13.7px;color:#111;transform:scaleX(0.958)">Name</div>
<div class="t" style="left:17.7px;top:163.60px;font-size:13.7px;color:#111;transform:scaleX(0.986)">Group</div>
<div class="t" style="left:67px;top:132.15px;font-size:13.7px;color:#111">Prepare concessions release</div>
<div class="t" style="left:67px;top:163.60px;font-size:13.7px;color:#111;transform:scaleX(0.868)">LICADHO</div>
<div class="t" style="left:90px;top:202.00px;font-size:13.7px;color:#111;transform:scaleX(1.046)">Inputs</div>
<div class="t" style="left:32.8px;top:221.40px;font-size:13.7px;color:#111;transform:scaleX(0.984)">Parameters</div>
<div class="t" style="left:71.3px;top:240.50px;font-size:13.7px;color:#111;transform:scaleX(1.018)">Authentication Con...</div>
<div class="t" style="left:71.3px;top:259.81px;font-size:13.7px;color:#111">Boolean</div>
<div class="t" style="left:71.3px;top:279.12px;font-size:13.7px;color:#111;transform:scaleX(0.978)">Color</div>
<div class="t" style="left:71.3px;top:298.43px;font-size:13.7px;color:#111">Connection Name</div>
<div class="t" style="left:71.3px;top:317.74px;font-size:13.7px;color:#111">Coordinate Operati...</div>
<div class="t" style="left:71.3px;top:337.05px;font-size:13.7px;color:#111;transform:scaleX(0.796)">CRS</div>
<div class="t" style="left:71.3px;top:356.36px;font-size:13.7px;color:#111;transform:scaleX(0.977)">Database Schema</div>
<div class="t" style="left:71.3px;top:375.67px;font-size:13.7px;color:#111">Database Table</div>
<div class="t" style="left:71.3px;top:394.98px;font-size:13.7px;color:#111;transform:scaleX(1.019)">Datetime</div>
<div class="t" style="left:71.3px;top:414.29px;font-size:13.7px;color:#111;transform:scaleX(0.988)">Distance</div>
<div class="t" style="left:71.3px;top:433.60px;font-size:13.7px;color:#111;transform:scaleX(0.959)">Enum</div>
<div class="t" style="left:71.3px;top:452.91px;font-size:13.7px;color:#111;transform:scaleX(0.985)">Expression</div>
<div class="t" style="left:20.1px;top:483.00px;font-size:13.7px;color:#111;transform:scaleX(1.019)">Reorder Model Inputs...</div>
<div class="t" style="left:24.4px;top:515.20px;font-size:13.7px;color:#111;transform:scaleX(1.067)">Inputs</div>
<div class="t" style="left:93.3px;top:512.40px;font-size:13.7px;color:#111;transform:scaleX(1.036)">Algorithms</div>
<div class="t" style="left:62.3px;top:543.40px;font-size:13.7px;color:#111;transform:scaleX(1.030)">Undo History</div>
<div class="t" style="left:14.3px;top:563.00px;font-size:13.7px;color:#111;transform:scaleX(0.976)">&lt;empty&gt;</div>
<div class="t" style="left:24.6px;top:770.40px;font-size:13.7px;color:#111;transform:scaleX(1.030)">Undo History</div>
<div class="t" style="left:135.9px;top:767.90px;font-size:13.7px;color:#111;transform:scaleX(1.017)">Variables</div>
</body></html>
